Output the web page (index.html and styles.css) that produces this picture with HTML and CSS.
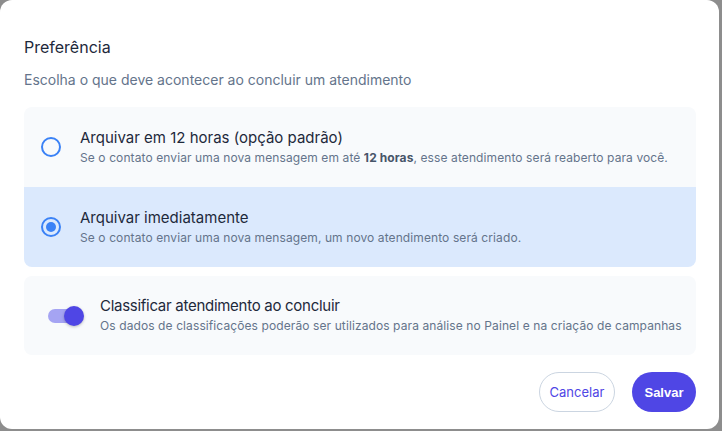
FILE: index.html
```html
<!DOCTYPE html>
<html lang="pt-BR">
<head>
<meta charset="utf-8">
<link rel="stylesheet" href="styles.css">
</head>
<body>
<div class="modal">
  <h1 class="title">Preferência</h1>
  <p class="subtitle">Escolha o que deve acontecer ao concluir um atendimento</p>
  <div class="group">
    <div class="option">
      <span class="radio"></span>
      <div class="texts">
        <div class="opt-title">Arquivar em 12 horas (opção padrão)</div>
        <div class="opt-desc">Se o contato enviar uma nova mensagem em até <b>12 horas</b>, esse atendimento será reaberto para você.</div>
      </div>
    </div>
    <div class="option selected">
      <span class="radio checked"></span>
      <div class="texts">
        <div class="opt-title">Arquivar imediatamente</div>
        <div class="opt-desc">Se o contato enviar uma nova mensagem, um novo atendimento será criado.</div>
      </div>
    </div>
  </div>
  <div class="card">
    <span class="toggle"><span class="knob"></span></span>
    <div class="texts">
      <div class="opt-title tight">Classificar atendimento ao concluir</div>
      <div class="opt-desc">Os dados de classificações poderão ser utilizados para análise no Painel e na criação de campanhas</div>
    </div>
  </div>
  <div class="actions">
    <button class="btn btn-cancel">Cancelar</button>
    <button class="btn btn-save">Salvar</button>
  </div>
</div>
</body>
</html>
```
FILE: styles.css
```css
html, body {
  margin: 0;
  padding: 0;
}
body {
  background: #8d8d8d;
  width: 722px;
  height: 431px;
  overflow: hidden;
  font-family: Inter, "Noto Sans", sans-serif;
}
.modal {
  box-sizing: border-box;
  width: 719px;
  height: 429px;
  background: #ffffff;
  border-radius: 12px;
  padding: 36px 23px 0 24px;
  display: flex;
  flex-direction: column;
}
.title {
  margin: 0;
  font-size: 16px;
  line-height: 22px;
  font-weight: 400;
  color: #1e293b;
}
.subtitle {
  margin: 12px 0 0;
  font-size: 14px;
  line-height: 20px;
  color: #64748b;
}
.group {
  margin-top: 17px;
  border-radius: 8px;
  overflow: hidden;
  display: flex;
  flex-direction: column;
}
.option {
  height: 80px;
  display: flex;
  align-items: center;
  padding-left: 17px;
  background: #f8fafc;
}
.option.selected {
  background: #dbe9fd;
}
.radio {
  box-sizing: border-box;
  width: 20px;
  height: 20px;
  border-radius: 50%;
  border: 2px solid #3b82f6;
  margin-right: 19px;
  flex: none;
  display: flex;
  align-items: center;
  justify-content: center;
}
.radio.checked::after {
  content: "";
  width: 10px;
  height: 10px;
  border-radius: 50%;
  background: #3b82f6;
}
.texts {
  display: flex;
  flex-direction: column;
}
.opt-title {
  font-size: 15px;
  line-height: 20px;
  color: #1e293b;
}
.opt-title.tight {
  letter-spacing: -0.28px;
}
.opt-desc {
  margin-top: 1px;
  font-size: 12px;
  line-height: 18px;
  letter-spacing: 0.1px;
  color: #64748b;
}
.opt-desc b {
  color: #475569;
  font-weight: 700;
}
.card {
  margin-top: 9px;
  height: 79px;
  border-radius: 8px;
  background: #f8fafc;
  display: flex;
  align-items: center;
  padding-left: 24px;
}
.toggle {
  position: relative;
  width: 32px;
  height: 14px;
  border-radius: 7px;
  background: #a5a4f3;
  margin-right: 20px;
  flex: none;
}
.knob {
  position: absolute;
  right: -4px;
  top: -3px;
  width: 20px;
  height: 20px;
  border-radius: 50%;
  background: #4f46e5;
  box-shadow: 0 1px 3px rgba(0, 0, 0, 0.25);
}
.actions {
  margin-top: 17px;
  display: flex;
  justify-content: flex-end;
  gap: 17px;
}
.btn {
  height: 40px;
  border-radius: 20px;
  font-size: 13px;
  cursor: pointer;
  padding: 0;
}
.btn-cancel {
  width: 76px;
  background: #ffffff;
  border: 1px solid #cbd5e1;
  color: #4f46e5;
  font-family: Inter, "Noto Sans", sans-serif;
}
.btn-save {
  width: 64px;
  background: #4f46e5;
  border: none;
  color: #ffffff;
  font-weight: 700;
  font-family: "Liberation Sans", Arial, sans-serif;
}
```
